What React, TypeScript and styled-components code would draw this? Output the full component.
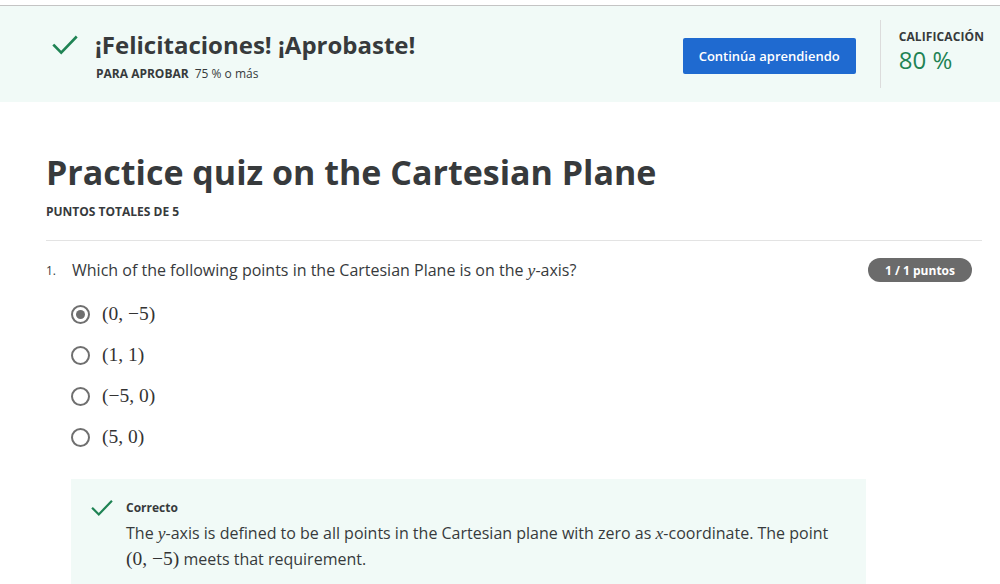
import React from "react";
import styled, { createGlobalStyle } from "styled-components";

const Global = createGlobalStyle`
  html, body { margin: 0; padding: 0; background: #ffffff; }
  body { font-family: "Open Sans", "Noto Sans", sans-serif; color: #373a3c; }
  * { box-sizing: border-box; }
`;

const Page = styled.div`
  width: 1000px;
  height: 584px;
  overflow: hidden;
  padding-top: 5px;
`;

const Banner = styled.header`
  display: flex;
  align-items: flex-start;
  height: 97px;
  background: #f1faf7;
  border-top: 1px solid #c4c4c4;
  padding: 14px 16px 0 52px;
`;

const PassBlock = styled.div`
  display: flex;
  align-items: flex-start;
  gap: 17px;
  flex: 1;
  margin-top: 10px;
`;

const CheckIcon = styled.svg<{ $size: number }>`
  width: ${(p) => p.$size}px;
  height: ${(p) => p.$size}px;
  flex: none;
`;

const BannerCheck = styled.div`
  margin-top: 2px;
  display: flex;
`;

const PassText = styled.div`
  display: flex;
  flex-direction: column;
  gap: 5px;
`;

const PassTitle = styled.h2`
  margin: 0;
  font-size: 24px;
  line-height: 30px;
  font-weight: 700;
  color: #373a3c;
`;

const Requirement = styled.div`
  font-size: 12px;
  line-height: 16px;
  color: #373a3c;
  padding-left: 1px;
  margin-top: 1px;
`;

const ReqLabel = styled.span`
  font-weight: 700;
  margin-right: 6px;
`;

const PrimaryButton = styled.button`
  height: 36px;
  width: 173px;
  border: none;
  border-radius: 2px;
  background: #1f6ad0;
  color: #ffffff;
  font-family: "Open Sans", sans-serif;
  font-size: 13px;
  font-weight: 600;
  margin-top: 18px;
  cursor: pointer;
`;

const Divider = styled.div`
  width: 1px;
  height: 68px;
  background: #dcdcdc;
  margin: 0 18px 0 24px;
`;

const GradeBlock = styled.div`
  display: flex;
  flex-direction: column;
  margin-top: 9px;
  gap: 1px;
`;

const GradeLabel = styled.div`
  font-size: 12px;
  font-weight: 700;
  line-height: 16px;
  letter-spacing: 0.1px;
`;

const GradeValue = styled.div`
  font-size: 24px;
  line-height: 28px;
  color: #1f8354;
`;

const Main = styled.main`
  padding: 48px 18px 0 46px;
`;

const QuizTitle = styled.h1`
  margin: 0;
  font-size: 34px;
  line-height: 44px;
  font-weight: 700;
  color: #373a3c;
`;

const TotalPoints = styled.div`
  margin-top: 10px;
  font-size: 12px;
  font-weight: 700;
  line-height: 16px;
  padding-bottom: 20px;
  border-bottom: 1px solid #e3e3e3;
`;

const QuestionRow = styled.div`
  display: flex;
  align-items: center;
  margin-top: 17px;
  padding-right: 10px;
`;

const QNumber = styled.span`
  width: 26px;
  font-size: 12px;
  flex: none;
`;

const QText = styled.div`
  flex: 1;
  font-size: 16px;
  line-height: 22px;
`;

const MathVar = styled.span`
  font-family: "Liberation Serif", "DejaVu Serif", serif;
  font-style: italic;
  font-size: 1.1em;
`;

const Badge = styled.span`
  background: #6b6b6b;
  color: #ffffff;
  font-size: 12px;
  font-weight: 700;
  height: 24px;
  padding: 0 17px;
  border-radius: 12px;
  display: inline-flex;
  align-items: center;
`;

const Options = styled.div`
  display: flex;
  flex-direction: column;
  gap: 19px;
  margin: 21px 0 0 25px;
`;

const Option = styled.label`
  display: flex;
  align-items: center;
  gap: 12px;
  height: 22px;
`;

const Radio = styled.span<{ $checked?: boolean }>`
  width: 19px;
  height: 19px;
  border-radius: 50%;
  border: 2px solid #6f6f6f;
  display: inline-flex;
  align-items: center;
  justify-content: center;
  flex: none;
  &::after {
    content: "";
    width: 9px;
    height: 9px;
    border-radius: 50%;
    background: ${(p) => (p.$checked ? "#6f6f6f" : "transparent")};
  }
`;

const MathText = styled.span`
  font-family: "Liberation Serif", "DejaVu Serif", serif;
  font-size: 19.5px;
  color: #333;
`;

const Feedback = styled.section`
  margin: 31px 0 0 25px;
  width: 795px;
  background: #f1faf7;
  padding: 18px 20px 20px 20px;
  display: grid;
  grid-template-columns: 24px 1fr;
  align-items: center;
  column-gap: 11px;
  row-gap: 2px;
`;

const FeedbackTitle = styled.div`
  font-size: 12px;
  font-weight: 700;
  line-height: 20px;
`;

const FeedbackText = styled.p`
  grid-column: 2;
  margin: 0;
  font-size: 16px;
  line-height: 25px;
  color: #373a3c;
`;

const Check = ({ size }: { size: number }) => (
  <CheckIcon $size={size} viewBox="0 0 24 24" fill="none">
    <path d="M2 12.5 L8.5 19 L22 5" stroke="#1f8354" strokeWidth="2.4" strokeLinecap="square" />
  </CheckIcon>
);

export default function App() {
  const options = [
    { label: "(0, −5)", checked: true },
    { label: "(1, 1)" },
    { label: "(−5, 0)" },
    { label: "(5, 0)" },
  ];
  return (
    <Page>
      <Global />
      <Banner>
        <PassBlock>
          <BannerCheck>
            <Check size={26} />
          </BannerCheck>
          <PassText>
            <PassTitle>¡Felicitaciones! ¡Aprobaste!</PassTitle>
            <Requirement>
              <ReqLabel>PARA APROBAR</ReqLabel>75 % o más
            </Requirement>
          </PassText>
        </PassBlock>
        <PrimaryButton>Continúa aprendiendo</PrimaryButton>
        <Divider />
        <GradeBlock>
          <GradeLabel>CALIFICACIÓN</GradeLabel>
          <GradeValue>80 %</GradeValue>
        </GradeBlock>
      </Banner>
      <Main>
        <QuizTitle>Practice quiz on the Cartesian Plane</QuizTitle>
        <TotalPoints>PUNTOS TOTALES DE 5</TotalPoints>
        <QuestionRow>
          <QNumber>1.</QNumber>
          <QText>
            Which of the following points in the Cartesian Plane is on the <MathVar>y</MathVar>-axis?
          </QText>
          <Badge>1 / 1 puntos</Badge>
        </QuestionRow>
        <Options>
          {options.map((o) => (
            <Option key={o.label}>
              <Radio $checked={o.checked} />
              <MathText>{o.label}</MathText>
            </Option>
          ))}
        </Options>
        <Feedback>
          <Check size={22} />
          <FeedbackTitle>Correcto</FeedbackTitle>
          <FeedbackText>
            The <MathVar>y</MathVar>-axis is defined to be all points in the Cartesian plane with zero as{" "}
            <MathVar>x</MathVar>-coordinate. The point <MathText>(0, −5)</MathText> meets that requirement.
          </FeedbackText>
        </Feedback>
      </Main>
    </Page>
  );
}
